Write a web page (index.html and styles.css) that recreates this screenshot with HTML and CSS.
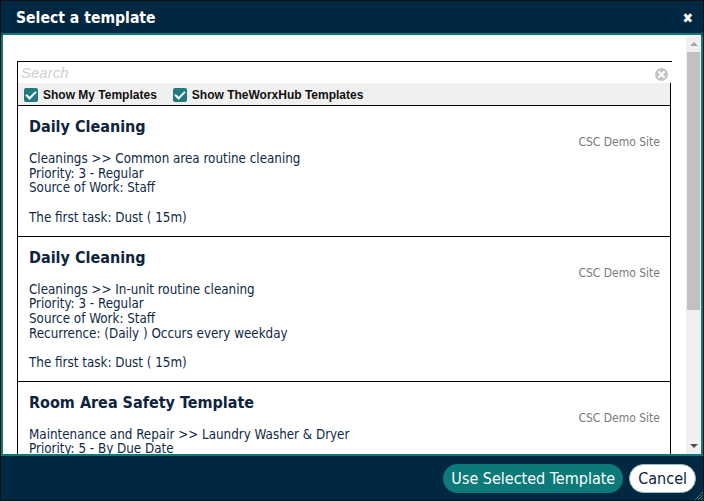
FILE: index.html
```html
<!DOCTYPE html>
<html lang="en">
  <head>
    <meta charset="UTF-8" />
    <meta name="viewport" content="width=device-width, initial-scale=1.0" />
    <title>Select a template</title>
    <link rel="stylesheet" href="styles.css">
  </head>
  <body>
    <div class="dialog">
      <div class="dialog-header">
        <h1>Select a template</h1>
        <span class="close-btn">&#10006;</span>
      </div>

      <div class="dialog-body">
        <div class="dialog-content">
          <div class="template-box">
            <div class="search-row">
              <span class="search-placeholder">Search</span>
              <svg class="clear-icon" width="13" height="13" viewBox="0 0 13 13">
                <circle cx="6.5" cy="6.5" r="6.5" fill="#c3c3c3" />
                <path d="M4 4 L9 9 M9 4 L4 9" stroke="#fff" stroke-width="2" stroke-linecap="round" />
              </svg>
            </div>
            <div class="filter-row">
              <label class="filter"><span class="check"></span>Show My Templates</label>
              <label class="filter"><span class="check"></span>Show TheWorxHub Templates</label>
            </div>

            <div class="template-item">
              <div class="template-title">Daily Cleaning</div>
              <div class="template-site">CSC Demo Site</div>
              <div class="template-details">
                <div>Cleanings &gt;&gt; Common area routine cleaning</div>
                <div>Priority: 3 - Regular</div>
                <div>Source of Work: Staff</div>
                <div class="first-task">The first task: Dust ( 15m)</div>
              </div>
            </div>

            <div class="template-item">
              <div class="template-title">Daily Cleaning</div>
              <div class="template-site">CSC Demo Site</div>
              <div class="template-details">
                <div>Cleanings &gt;&gt; In-unit routine cleaning</div>
                <div>Priority: 3 - Regular</div>
                <div>Source of Work: Staff</div>
                <div>Recurrence: (Daily ) Occurs every weekday</div>
                <div class="first-task">The first task: Dust ( 15m)</div>
              </div>
            </div>

            <div class="template-item">
              <div class="template-title">Room Area Safety Template</div>
              <div class="template-site">CSC Demo Site</div>
              <div class="template-details">
                <div>Maintenance and Repair &gt;&gt; Laundry Washer &amp; Dryer</div>
                <div>Priority: 5 - By Due Date</div>
                <div>Source of Work: Staff</div>
              </div>
            </div>
          </div>
        </div>

        <!-- fake scrollbar, the list keeps scrolling below -->
        <div class="scrollbar">
          <span class="arrow up"></span>
          <div class="track"><div class="thumb"></div></div>
          <span class="arrow down"></span>
        </div>
      </div>

      <div class="dialog-footer">
        <button class="use-btn">Use Selected Template</button>
        <button class="cancel-btn">Cancel</button>
        <svg class="grip" width="9" height="9" viewBox="0 0 9 9">
          <path d="M9 1 L1 9 M9 4 L4 9 M9 7 L7 9" stroke="#2a8a88" stroke-width="1" />
        </svg>
      </div>
    </div>
  </body>
</html>
```

FILE: styles.css
```css
* {
  margin: 0;
  padding: 0;
  box-sizing: border-box;
}

body {
  font-family: "DejaVu Sans Condensed", "DejaVu Sans", sans-serif;
  background: #fff;
  width: 704px;
  height: 501px;
  overflow: hidden;
}

.dialog {
  width: 704px;
  height: 501px;
  border: 1px solid #111;
  display: flex;
  flex-direction: column;
  background: #002842;
}

.dialog-header {
  height: 34px;
  flex-shrink: 0;
  display: flex;
  align-items: center;
  justify-content: space-between;
  padding: 2px 10px 0 15px;
  border-bottom: 2px solid #0b7a78;
  border-radius: 0 0 4px 4px;
}

.dialog-header h1 {
  color: #fff;
  font-family: "DejaVu Sans Condensed", sans-serif;
  font-size: 15.6px;
  font-weight: bold;
}

.close-btn {
  color: #fff;
  font-size: 14px;
  font-weight: bold;
}

.dialog-body {
  flex: 1;
  display: flex;
  background: #fff;
  border-left: 2px solid #0b7a78;
  border-right: 2px solid #0b7a78;
  overflow: hidden;
}

.dialog-content {
  flex: 1;
  padding: 26px 14px 0 14px;
  overflow: hidden;
}

.template-box {
  border-left: 1px solid #000;
  border-top: 1px solid #000;
  color: #0f2a47;
}

.search-row {
  height: 21px;
  display: flex;
  align-items: center;
  justify-content: space-between;
  padding: 0 4px 0 3px;
}

.search-placeholder {
  color: #d0d0d0;
  font-style: italic;
  font-size: 15px;
  font-family: "Liberation Sans", Arial, sans-serif;
}

.clear-icon {
  margin-top: 4px;
}

.filter-row {
  height: 23px;
  display: flex;
  align-items: center;
  gap: 16px;
  padding: 1px 0 0 6px;
  background: #f0f0f0;
  border-right: 1px solid #000;
  border-bottom: 1px solid #000;
  margin-right: 1px;
}

.filter {
  display: flex;
  align-items: center;
  gap: 5px;
  font-family: "Liberation Sans", Arial, sans-serif;
  font-size: 12px;
  font-weight: bold;
  color: #111;
}

.check {
  width: 14px;
  height: 14px;
  border-radius: 2px;
  background: #1f7b80;
  position: relative;
}

.check::after {
  content: "";
  position: absolute;
  left: 4px;
  top: 1px;
  width: 4px;
  height: 8px;
  border: solid #fff;
  border-width: 0 2px 2px 0;
  transform: rotate(45deg);
}

.template-item {
  padding: 12px 10px 10px 11px;
  border-right: 1px solid #000;
  border-bottom: 1px solid #000;
  margin-right: 1px;
}

.template-title {
  font-size: 16px;
  font-weight: bold;
  line-height: 18px;
  color: #0c2440;
}

.template-site {
  text-align: right;
  font-size: 12px;
  line-height: 13px;
  color: #7a7a7a;
}

.template-details {
  margin-top: 3px;
  font-size: 13.3px;
  line-height: 14.7px;
}

.first-task {
  margin-top: 14.7px;
}

.scrollbar {
  width: 15px;
  margin: 1px 0 0 0;
  background: #f0f0f0;
  display: flex;
  flex-direction: column;
  align-items: center;
}

.arrow {
  width: 0;
  height: 0;
  border-left: 4px solid transparent;
  border-right: 4px solid transparent;
  margin: 6px 0;
}

.arrow.up {
  border-bottom: 4px solid #a3a3a3;
}

.arrow.down {
  border-top: 4px solid #505050;
}

.track {
  flex: 1;
  width: 100%;
  padding: 0 1px;
}

.thumb {
  height: 258px;
  background: #c1c1c1;
}

.dialog-footer {
  height: 46px;
  flex-shrink: 0;
  display: flex;
  justify-content: flex-end;
  align-items: flex-start;
  gap: 6px;
  padding: 8px 7px 0 0;
  border-top: 2px solid #0b7a78;
  position: relative;
}

.dialog-footer button {
  height: 29px;
  border-radius: 15px;
  font-family: "DejaVu Sans Condensed", sans-serif;
  font-size: 16px;
  padding: 0 8px;
  cursor: pointer;
}

.use-btn {
  background: #0b7a78;
  color: #fff;
  border: none;
}

.cancel-btn {
  background: #fff;
  color: #0c2440;
  border: 1px solid #9bb;
  padding: 0 7px;
}

.grip {
  position: absolute;
  right: 0;
  bottom: 0;
}
```
